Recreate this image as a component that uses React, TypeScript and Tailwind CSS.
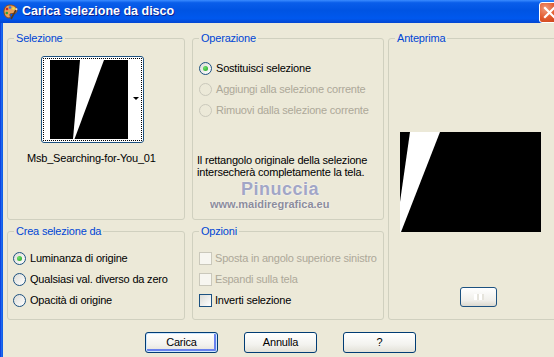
import type { ReactNode } from "react";

function Group({
  title,
  className,
  children,
}: {
  title: string;
  className?: string;
  children?: ReactNode;
}) {
  return (
    <div
      className={`relative rounded-[3px] border border-[#D0D0BF] ${className ?? ""}`}
    >
      <span className="absolute -top-[7px] left-[6px] bg-[#ECE9D8] px-[2px] leading-[13px] text-[#0046D5]">
        {title}
      </span>
      {children}
    </div>
  );
}

function Radio({
  label,
  checked,
  disabled,
}: {
  label: string;
  checked?: boolean;
  disabled?: boolean;
}) {
  return (
    <div className="flex h-[21px] items-center gap-[4px] whitespace-nowrap">
      <span
        className={`flex h-[13px] w-[13px] shrink-0 items-center justify-center rounded-full border ${
          disabled
            ? "border-[#CAC8BB] bg-transparent"
            : "border-[#1C5180] bg-[linear-gradient(135deg,#DCDCD7,#FFFFFF)]"
        }`}
      >
        {checked && (
          <span className="h-[5px] w-[5px] rounded-full bg-[radial-gradient(circle_at_35%_35%,#6FE06B,#21A121)]" />
        )}
      </span>
      <span className={disabled ? "text-[#ACA899]" : "text-black"}>{label}</span>
    </div>
  );
}

function Check({ label, disabled }: { label: string; disabled?: boolean }) {
  return (
    <div className="flex h-[21px] items-center gap-[3px] whitespace-nowrap">
      <span
        className={`h-[13px] w-[13px] shrink-0 border ${
          disabled
            ? "border-[#CAC8BB] bg-[#F7F6F0]"
            : "border-[#1C5180] bg-[linear-gradient(135deg,#DCDCD7,#FFFFFF)]"
        }`}
      />
      <span className={disabled ? "text-[#ACA899]" : "text-black"}>{label}</span>
    </div>
  );
}

function XpButton({ label, primary }: { label: string; primary?: boolean }) {
  return (
    <button
      className={`h-[21px] w-[73px] rounded-[3px] border border-[#003C74] bg-[linear-gradient(to_bottom,#FFFFFF,#F3F3EF_60%,#E3E1D8)] leading-none text-black ${
        primary
          ? "shadow-[inset_0_0_0_1px_#CEE7FF,inset_-1px_-1px_0_2px_#6982EE]"
          : ""
      }`}
    >
      {label}
    </button>
  );
}

function PaletteIcon() {
  return (
    <svg width="15" height="16" viewBox="0 0 15 16">
      <path
        d="M7 1C3 1 1 4 1 7.5 1 11 3 14 6 14c1.5 0 1.5-1.5 1-2.5-.5-1 0-2 1.5-2H11c2 0 3-1.5 3-3C14 3 11 1 7 1z"
        fill="#E9A05A"
        stroke="#8A4A1C"
        strokeWidth="1"
      />
      <circle cx="4" cy="5" r="1.3" fill="#D0261F" />
      <circle cx="7" cy="3.5" r="1.3" fill="#2E7BE0" />
      <circle cx="10.5" cy="4.5" r="1.3" fill="#F2E23A" />
      <circle cx="3.8" cy="9" r="1.3" fill="#2DA33A" />
      <path d="M13 6 L8 15" stroke="#5B3A1A" strokeWidth="1.6" />
      <path d="M13 6 L14 4.5" stroke="#E0E0E0" strokeWidth="1.6" />
    </svg>
  );
}

export default function App() {
  return (
    <div className="flex h-[357px] w-[554px] flex-col overflow-hidden bg-[#ECE9D8] font-['Liberation_Sans',Arial,sans-serif] text-[11px] text-black">
      {/* title bar */}
      <div className="flex h-[23px] shrink-0 items-center bg-[linear-gradient(to_bottom,#3A8CFF_0%,#0A5EEA_12%,#0054E3_45%,#0058EE_80%,#0346D2_100%)] pl-[3px]">
        <PaletteIcon />
        <span className="ml-[4px] text-[12.5px] font-bold text-white [text-shadow:1px_1px_0_#0F1F8A]">
          Carica selezione da disco
        </span>
        <div className="ml-auto -mr-[6px] mt-[1px] flex h-[21px] w-[21px] items-center justify-center rounded-[3px] border border-white bg-[radial-gradient(circle_at_30%_30%,#F09A7C,#E25A2E_50%,#C23C16)]">
          <svg width="13" height="13" viewBox="0 0 13 13">
            <path d="M2 2 L11 11 M11 2 L2 11" stroke="#FFFFFF" strokeWidth="2.2" strokeLinecap="square" />
          </svg>
        </div>
      </div>

      <div className="flex flex-1">
        <div className="w-[3px] shrink-0 bg-[linear-gradient(to_right,#0831D9,#1D68EE,#0A5BE6)]" />
        <div className="flex flex-1 flex-col pl-[4px] pt-[15px] tracking-[-0.2px]">
          <div className="grid grid-cols-[178px_192px_166px] grid-rows-[182px_89px] gap-x-[7px] gap-y-[11px]">
            <Group title="Selezione">
              <div className="flex flex-col items-start">
                <div className="ml-[33px] mt-[17px] flex h-[87px] w-[103px] items-center justify-center rounded-[3px] border border-[#1C5180] bg-white">
                  <div className="relative flex h-[83px] w-[99px] items-center border border-dotted border-black pl-[6px]">
                    <svg width="78" height="79" viewBox="0 0 78 79">
                      <rect width="78" height="79" fill="#000" />
                      <polygon points="30,0 54,0 24.5,79 23,79" fill="#fff" />
                    </svg>
                    <span className="absolute right-[2px] top-[38px] h-0 w-0 border-x-[3px] border-t-[3px] border-x-transparent border-t-black" />
                  </div>
                </div>
                <span className="ml-[19px] mt-[9px] leading-[13px]">Msb_Searching-for-You_01</span>
              </div>
            </Group>

            <Group title="Operazione">
              <div className="flex flex-col pl-[6px] pt-[19px]">
                <Radio label="Sostituisci selezione" checked />
                <Radio label="Aggiungi alla selezione corrente" disabled />
                <Radio label="Rimuovi dalla selezione corrente" disabled />
              </div>
              <p className="mt-[33px] pl-[4px] leading-[12px]">
                Il rettangolo originale della selezione
                <br />
                intersecherà completamente la tela.
              </p>
              <span className="absolute left-[48px] top-[141px] text-[18px] font-bold leading-[18px] tracking-[0.5px] text-[#A2A6C6] [text-shadow:0_0_2px_#FFFFFF]">
                Pinuccia
              </span>
              <span className="absolute left-[17px] top-[159px] text-[11px] font-bold leading-[12px] tracking-normal text-[#8C8C9C] [text-shadow:0_0_2px_#FFFFFF]">
                www.maidiregrafica.eu
              </span>
            </Group>

            <Group title="Anteprima" className="row-span-2 -ml-[3px]">
              <div className="flex h-full flex-col items-start">
                <svg className="ml-[11px] mt-[93px]" width="141" height="100" viewBox="0 0 141 100">
                  <rect width="141" height="100" fill="#000" />
                  <polygon points="10,0 40,0 1,100 0,100 0,70" fill="#fff" />
                </svg>
                <button className="ml-[71px] mt-[55px] flex h-[20px] w-[37px] items-center justify-center rounded-[3px] border border-[#1C5180] bg-[linear-gradient(to_bottom,#FFFFFF,#F0EFEA_70%,#DCD9CF)]">
                  <span className="h-[6px] w-[10px] bg-[repeating-linear-gradient(90deg,#FFFFFF_0_3px,#E6E4DC_3px_5px)]" />
                </button>
              </div>
            </Group>

            <Group title="Crea selezione da">
              <div className="flex flex-col pl-[5px] pt-[16px]">
                <Radio label="Luminanza di origine" checked />
                <Radio label="Qualsiasi val. diverso da zero" />
                <Radio label="Opacità di origine" />
              </div>
            </Group>

            <Group title="Opzioni">
              <div className="flex flex-col pl-[6px] pt-[16px]">
                <Check label="Sposta in angolo superiore sinistro" disabled />
                <Check label="Espandi sulla tela" disabled />
                <Check label="Inverti selezione" />
              </div>
            </Group>
          </div>

          <div className="mt-[12px] flex gap-[26px] pl-[138px]">
            <XpButton label="Carica" primary />
            <XpButton label="Annulla" />
            <XpButton label="?" />
          </div>
        </div>
      </div>
    </div>
  );
}
